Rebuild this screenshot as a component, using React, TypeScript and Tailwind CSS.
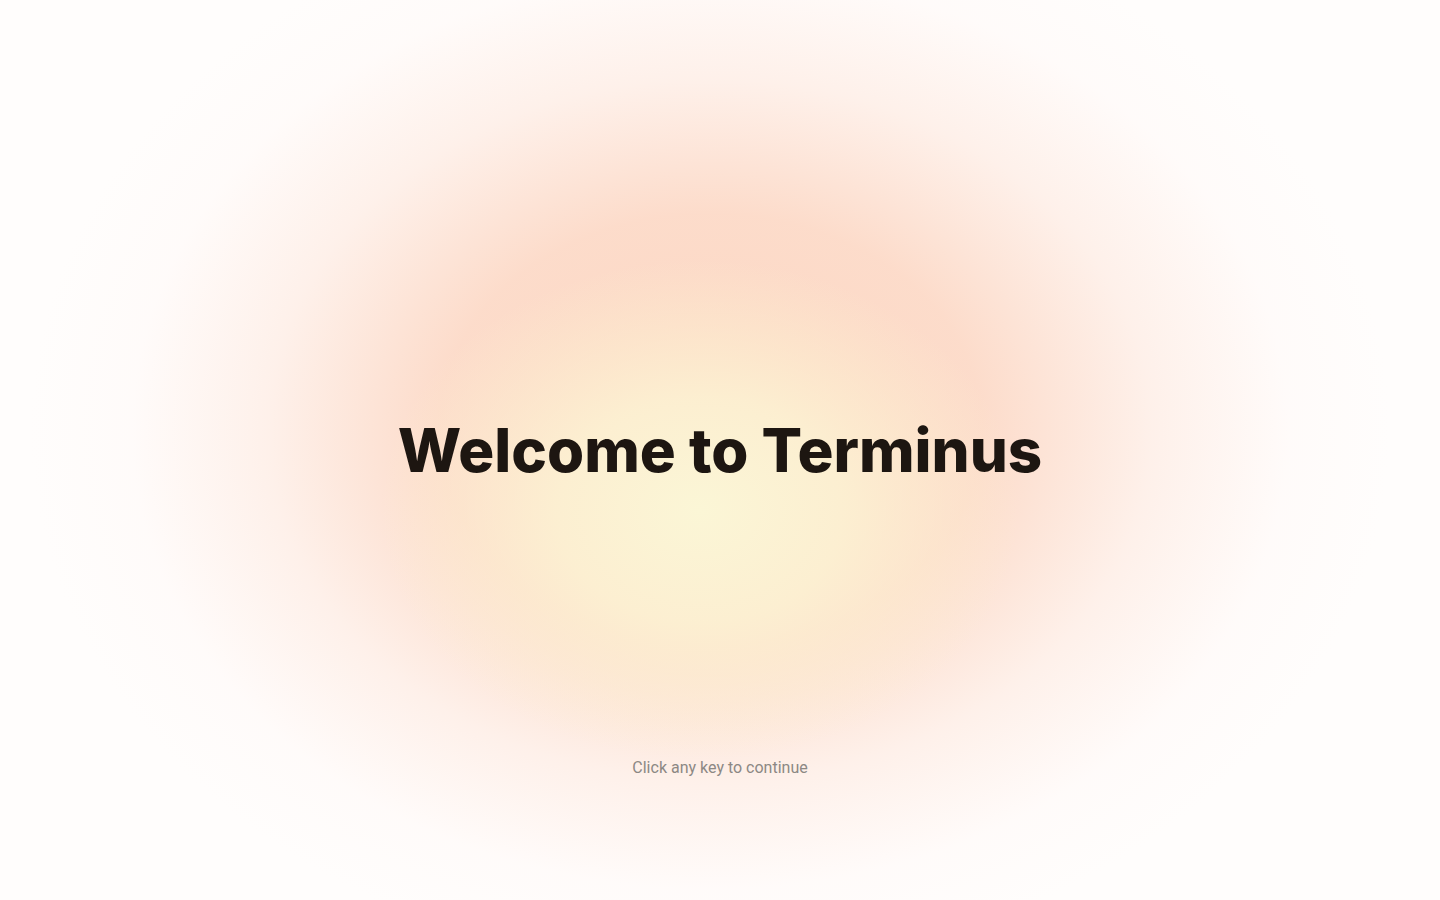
export default function App() {
  return (
    <div className="relative h-screen w-full overflow-hidden bg-[#fffdfc]">
      {/* soft background glow */}
      <div className="pointer-events-none absolute inset-0 bg-[radial-gradient(ellipse_320px_250px_at_700px_510px,rgba(251,246,214,1)_0%,rgba(252,241,210,0.9)_45%,rgba(252,236,212,0)_100%),radial-gradient(ellipse_680px_540px_at_710px_430px,rgba(252,212,190,0.95)_0%,rgba(252,214,194,0.85)_40%,rgba(253,228,216,0.5)_65%,rgba(255,243,240,0.2)_85%,rgba(255,253,252,0)_100%)]" />

      <div className="relative flex h-full flex-col items-center pt-[420px]">
        <h1 className="font-['Inter',sans-serif] text-[60px] font-extrabold leading-none tracking-normal text-[#1d1611]">
          Welcome to Terminus
        </h1>
        <p className="mt-[276px] font-['Roboto',sans-serif] text-base leading-6 text-[#8c8884]">
          Click any key to continue
        </p>
      </div>
    </div>
  );
}
